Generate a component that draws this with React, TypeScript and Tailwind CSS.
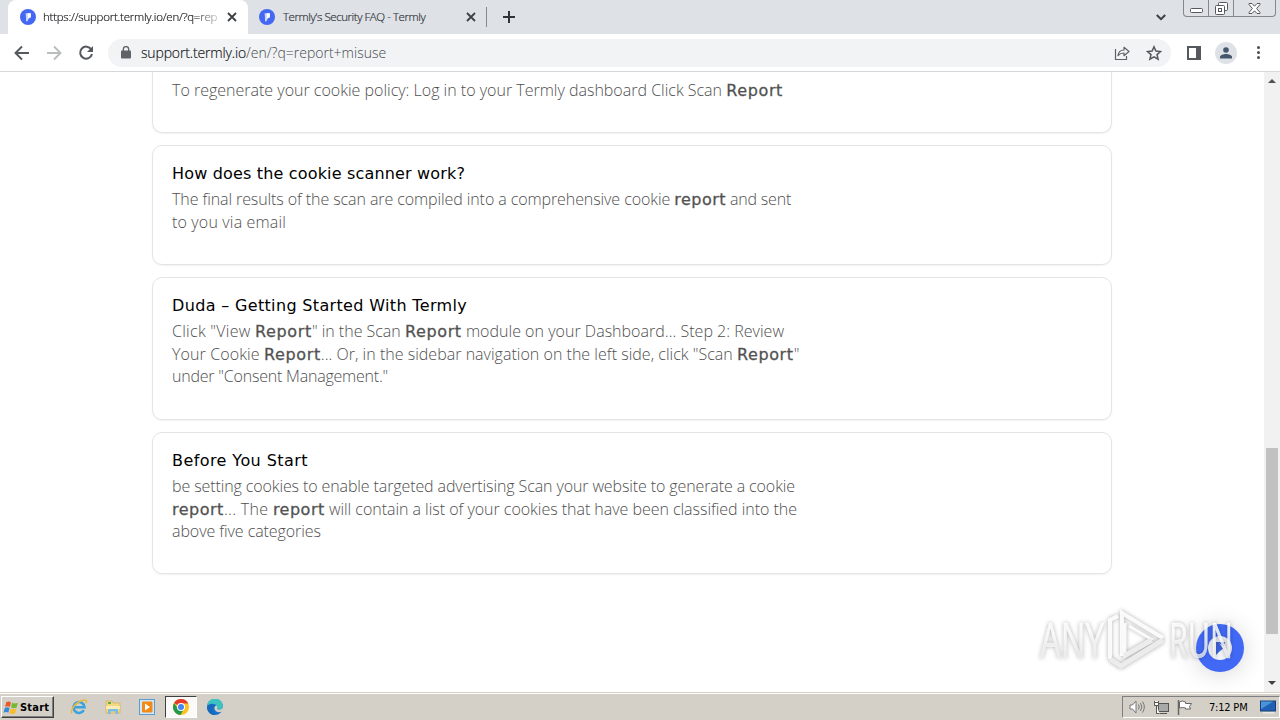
import React from "react";

interface Segment {
  text: string;
  className: string;
}

interface Article {
  title: string;
  titleClass: string;
  cardClass: string;
  lines: Segment[][];
}

const bold = "[font-family:'DejaVu_Sans',sans-serif] font-normal tracking-[0.63px] [-webkit-text-stroke:0.3px_#5c5c5c]";
const boldLower = "[font-family:'DejaVu_Sans',sans-serif] font-normal tracking-[0.5px] [-webkit-text-stroke:0.3px_#5c5c5c]";

const articles: Article[] = [
  {
    title: "How does the cookie scanner work?",
    titleClass: "tracking-[0.17px]",
    cardClass: "h-[120px]",
    lines: [
      [
        { text: "The final results of the scan are compiled into a comprehensive cookie ", className: "tracking-[-0.09px]" },
        { text: "report", className: boldLower },
        { text: " and sent", className: "tracking-[-0.2px]" },
      ],
      [{ text: "to you via email", className: "tracking-[0.16px]" }],
    ],
  },
  {
    title: "Duda – Getting Started With Termly",
    titleClass: "tracking-[0.34px]",
    cardClass: "h-[143px]",
    lines: [
      [
        { text: 'Click "View ', className: "tracking-[0.28px]" },
        { text: "Report", className: bold },
        { text: '" in the Scan ', className: "tracking-[-0.01px]" },
        { text: "Report", className: bold },
        { text: " module on your Dashboard... Step 2: Review", className: "tracking-[0.02px]" },
      ],
      [
        { text: "Your Cookie ", className: "tracking-[0.11px]" },
        { text: "Report", className: bold },
        { text: '... Or, in the sidebar navigation on the left side, click "Scan ', className: "tracking-[0.02px]" },
        { text: "Report", className: bold },
        { text: '"', className: "" },
      ],
      [{ text: 'under "Consent Management."', className: "tracking-[-0.21px]" }],
    ],
  },
  {
    title: "Before You Start",
    titleClass: "tracking-[0.42px]",
    cardClass: "h-[142px]",
    lines: [
      [{ text: "be setting cookies to enable targeted advertising Scan your website to generate a cookie", className: "tracking-[-0.11px]" }],
      [
        { text: "report", className: boldLower },
        { text: "... The ", className: "tracking-[0.33px]" },
        { text: "report", className: boldLower },
        { text: " will contain a list of your cookies that have been classified into the", className: "tracking-[-0.03px]" },
      ],
      [{ text: "above five categories", className: "tracking-[-0.07px]" }],
    ],
  },
];

function Line({ segments }: { segments: Segment[] }) {
  return (
    <p className="h-[22.5px] text-base leading-[22.5px] font-light whitespace-pre text-[#4f4f4f]">
      {segments.map((s, i) => (
        <span key={i} className={s.className}>{s.text}</span>
      ))}
    </p>
  );
}

function TermlyIcon() {
  return (
    <svg width="16" height="16" viewBox="0 0 16 16" className="shrink-0">
      <circle cx="8" cy="8" r="8" fill="#4568f2" />
      <path d="M5.600 4.200h5.200v4L8.600 9.600 7.600 12.200H6V8.600z" fill="#c9d4ff" />
      <path d="M7.800 4.200h3v4L7.800 9.800z" fill="#fff" />
    </svg>
  );
}

function CloseIcon() {
  return (
    <svg width="10" height="10" viewBox="0 0 10 10" stroke="#3c4043" strokeWidth="1.800" className="shrink-0">
      <path d="M1 1l8 8M9 1l-8 8" />
    </svg>
  );
}

function TabStrip() {
  return (
    <div className="flex h-[34px] bg-[#dee1e6] pl-2">
      <div className="flex h-full w-60 items-center rounded-t-lg bg-white pl-3">
        <TermlyIcon />
        <span className="ml-[7px] w-[175px] overflow-hidden text-[11.5px] tracking-[-0.24px] whitespace-nowrap text-[#202124] [-webkit-text-stroke:0.2px_#202124] [mask-image:linear-gradient(to_right,black_85%,transparent_105%)]">
          https://support.termly.io/en/?q=rep
        </span>
        <span className="ml-[9px] flex"><CloseIcon /></span>
      </div>
      <div className="flex h-full w-[239px] items-center pl-[11px]">
        <TermlyIcon />
        <span className="ml-2 w-[183px] text-[11.5px] tracking-[-0.44px] whitespace-nowrap text-[#303338] [-webkit-text-stroke:0.2px_#303338]">
          Termly's Security FAQ - Termly
        </span>
        <CloseIcon />
        <span className="ml-[10px] h-5 w-px shrink-0 bg-[#85888d]" />
      </div>
      <div className="flex h-full items-center pl-4">
        <svg width="12" height="12" viewBox="0 0 12 12" stroke="#303338" strokeWidth="2">
          <path d="M6 0v12M0 6h12" />
        </svg>
      </div>
      <div className="ml-auto flex h-full items-center pr-[17px]">
        <svg width="10" height="7" viewBox="0 0 10 7" fill="none" stroke="#3c4043" strokeWidth="2">
          <path d="M.8 1L5 5.200 9.200 1" />
        </svg>
      </div>
      <div className="mr-1 flex h-[17px] w-[93px] rounded-b border border-t-0 border-[#84878d]">
        <div className="flex w-[25px] items-center justify-center border-r border-[#84878d] pt-[5px]">
          <svg width="13" height="6" viewBox="0 0 13 6" fill="#fff" stroke="#55585e">
            <rect x=".5" y=".5" width="12" height="4" rx="1" />
          </svg>
        </div>
        <div className="flex w-[25px] items-center justify-center border-r border-[#84878d]">
          <svg width="13" height="13" viewBox="0 0 13 13" fill="#fff" stroke="#55585e">
            <rect x="3.500" y=".5" width="9" height="8" rx="1" />
            <rect x=".5" y="3.500" width="9" height="9" rx="1" />
            <rect x="3.500" y="6.500" width="3" height="3" />
          </svg>
        </div>
        <div className="flex flex-1 items-center justify-center">
          <svg width="13" height="11" viewBox="0 0 13 11" fill="#fff" stroke="#55585e">
            <path d="M1 .5h3l2.500 2.700L9 .5h3v1L8.600 5.500 12 9.500v1H9L6.500 7.800 4 10.500H1v-1l3.400-4L1 1.500z" />
          </svg>
        </div>
      </div>
    </div>
  );
}

function Toolbar() {
  return (
    <div className="flex h-[38px] items-center border-b border-[#d5d7da] bg-white pl-[14px]">
      <div className="flex w-[94px] shrink-0 items-center gap-4">
        <svg width="16" height="16" viewBox="0 0 16 16" fill="none" stroke="#55585c" strokeWidth="1.900">
          <path d="M15 8H2M8 1.500L1.500 8 8 14.500" />
        </svg>
        <svg width="16" height="16" viewBox="0 0 16 16" fill="none" stroke="#babcbe" strokeWidth="1.900">
          <path d="M1 8h13M8 1.500L14.500 8 8 14.500" />
        </svg>
        <svg width="16" height="16" viewBox="0 0 16 16" fill="none" stroke="#55585c" strokeWidth="2">
          <path d="M13.300 4.500A6 6 0 1 0 14 9" />
          <path d="M15 1v6H9z" fill="#55585c" stroke="none" />
        </svg>
      </div>
      <div className="flex h-7 w-[1063px] items-center rounded-full bg-[#f1f3f4] pl-[13px]">
        <svg width="10" height="13" viewBox="0 0 10 13">
          <rect y="4.500" width="10" height="8" rx="1" fill="#5f6368" />
          <path d="M2.300 5V3.300a2.700 2.700 0 0 1 5.400 0V5" fill="none" stroke="#5f6368" strokeWidth="1.400" />
        </svg>
        <p className="ml-[10px] text-sm whitespace-nowrap">
          <span className="tracking-[-0.15px] text-[#101214] [-webkit-text-stroke:0.15px_#101214]">support.termly.io</span>
          <span className="text-[#45494e]">/en/?q=report+misuse</span>
        </p>
        <svg width="16" height="16" viewBox="0 0 16 16" fill="none" stroke="#5f6368" strokeWidth="1.200" className="mr-4 ml-auto">
          <path d="M1.500 4v10.500h11V11" />
          <path d="M4 10.500C4.500 7 6.500 5 10 5V2.300l5 4.200-5 4.200V8C7.500 8 5.500 8.800 4 10.500z" strokeLinejoin="round" />
        </svg>
        <svg width="16" height="16" viewBox="0 0 16 16" fill="none" stroke="#55585c" strokeWidth="1.500" className="mr-[9px]">
          <path d="M8 1.800l1.900 4.300 4.600.4-3.500 3.100 1.100 4.600L8 11.800l-4.100 2.400L5 9.600 1.500 6.500l4.600-.4z" />
        </svg>
      </div>
      <svg width="15" height="14" viewBox="0 0 15 14" className="ml-4">
        <rect x="1" y="1" width="12" height="12" fill="#fff" stroke="#55585c" strokeWidth="2" />
        <rect x="9" y="0" width="5" height="14" fill="#55585c" />
      </svg>
      <div className="ml-[13px] flex size-[22px] items-center justify-center rounded-full bg-[#dee1e6]">
        <svg width="12" height="12" viewBox="0 0 12 12" fill="#47566f">
          <circle cx="6" cy="3" r="2.800" />
          <path d="M0 11.500V10c0-2 3.500-3 6-3s6 1 6 3v1.500z" />
        </svg>
      </div>
      <div className="ml-5 flex flex-col gap-[2px]">
        <span className="size-[3px] rounded-full bg-[#4b4e52]" />
        <span className="size-[3px] rounded-full bg-[#4b4e52]" />
        <span className="size-[3px] rounded-full bg-[#4b4e52]" />
      </div>
    </div>
  );
}

function Scrollbar() {
  return (
    <div className="flex w-4 shrink-0 flex-col items-center bg-[#f1f1f1]">
      <svg width="8" height="4" viewBox="0 0 8 4" className="mt-[7px]"><path d="M0 4l4-4 4 4z" fill="#505050" /></svg>
      <div className="mt-[365px] h-[186px] w-3 bg-[#c1c1c1]" />
      <svg width="8" height="4" viewBox="0 0 8 4" className="mt-auto mb-[7px]"><path d="M0 0l4 4 4-4z" fill="#404040" /></svg>
    </div>
  );
}

function Watermark() {
  return (
    <svg
      width="204"
      height="72"
      viewBox="0 0 204 72"
      className="absolute right-[41px] bottom-[14px] drop-shadow-[0_0_2px_rgba(0,0,0,0.35)]"
    >
      <defs>
        <linearGradient id="fade" x1="0" y1="0" x2="0" y2="1">
          <stop offset=".4" stopColor="#fff" stopOpacity=".85" />
          <stop offset="1" stopColor="#e4e4e4" stopOpacity=".7" />
        </linearGradient>
      </defs>
      <g fill="url(#fade)" stroke="url(#fade)" strokeWidth=".6" fontFamily="Open Sans, sans-serif" fontWeight="400" fontSize="49">
        <text x="5" y="52" textLength="64" lengthAdjust="spacingAndGlyphs">ANY</text>
        <text x="134" y="52" textLength="64" lengthAdjust="spacingAndGlyphs">RUN</text>
      </g>
      <g fill="none" stroke="#fff" strokeOpacity=".9" strokeWidth="4">
        <path d="M75 53V14l8-4M87 50V7l41 25" />
        <path d="M90 17v33l26-17-22-13" strokeWidth="3" />
      </g>
      <path d="M75 53l11 7 42-26M89 50l28-16" fill="none" stroke="#ececec" strokeWidth="5" />
    </svg>
  );
}

function ChatButton() {
  return (
    <div className="absolute right-9 bottom-5 flex size-12 items-center justify-center rounded-full bg-[#4169f5] shadow-[0_2px_24px_rgba(0,0,0,0.16)]">
      <svg width="24" height="24" viewBox="0 0 24 24">
        <circle cx="12" cy="12" r="12" fill="#f1f3fa" />
        <path d="M8 6h9l-1 6-4 3-4 4z" fill="#3f62dc" />
        <path d="M11 7l7 5-3 1z" fill="#cdd5f3" />
      </svg>
    </div>
  );
}

function QuickLaunch() {
  return (
    <div className="flex items-center">
      <div className="flex w-[34px] justify-center">
        <svg width="18" height="18" viewBox="0 0 18 18" fill="none">
          <path d="M13.800 12.200A5.500 5.500 0 1 1 14.500 9.200H4" stroke="#3aa3df" strokeWidth="2.600" />
          <path d="M2 15.500C-.5 12 6 4 12.500 2.200c4-1 4.500 1 3.300 3" stroke="#e9b93a" strokeWidth="1.500" />
        </svg>
      </div>
      <div className="flex w-[34px] justify-center">
        <svg width="16" height="16" viewBox="0 0 16 16">
          <path d="M1 2h6l1 2h7v10H1z" fill="#f4d983" stroke="#d1ac52" strokeWidth=".7" />
          <path d="M3 3h3v2H3z" fill="#5bab52" />
          <path d="M1 7h14v3H1z" fill="#fbedb5" />
          <path d="M3 15v-4q0-1 1-1h8q1 0 1 1v4h-2.500v-2.500h-5V15z" fill="#79bce5" />
        </svg>
      </div>
      <div className="flex w-[34px] justify-center">
        <svg width="16" height="16" viewBox="0 0 16 16">
          <rect x=".5" y=".5" width="15" height="15" fill="#d3e7f7" stroke="#5a9bd0" />
          <rect x="3" y="2.500" width="10.500" height="11" rx="1" fill="#f28a18" />
          <path d="M6 4.500l5 3.500-5 3.500z" fill="#fff" />
        </svg>
      </div>
      <div className="ml-px flex h-[22px] w-8 items-center justify-center border border-white border-t-[#404040] border-l-[#404040] bg-[#fbfaf9]">
        <svg width="16" height="16" viewBox="0 0 16 16">
          <circle cx="8" cy="8" r="8" fill="#fcc31e" />
          <path d="M8 8L1.070 4A8 8 0 0 1 14.930 4L15 4.500H8z" fill="#e33b2e" />
          <path d="M1.070 4A8 8 0 0 0 7.500 16L11 9.800 8 11.500 5 9.800z" fill="#269a4b" />
          <circle cx="8" cy="8" r="4" fill="#fff" />
          <circle cx="8" cy="8" r="3" fill="#4285f4" />
        </svg>
      </div>
      <div className="flex w-[36px] justify-center">
        <svg width="16" height="16" viewBox="0 0 16 16">
          <circle cx="8" cy="8" r="8" fill="#1a71c8" />
          <path d="M0 7.500A8 8 0 0 1 16 7.500c0 3-4 4-6 2.500.8-4-2.500-6-5.500-5.200C2.500 5.200.8 6.200 0 7.500z" fill="#3cc3c0" />
          <path d="M9.500 6.500c-2.500.5-3 4 0 6 2 1.200 4.200.7 5.500 0l1-1.500V8c-.5 2.500-4 3.500-6 2 .5-1 .4-2.500-.5-3.500z" fill="#d4d0c8" />
          <path d="M0 8c.5-3 6-4 8-1-3 1-3.500 6 1 9C4 16.500 0 13 0 8z" fill="#1769bd" />
        </svg>
      </div>
    </div>
  );
}

function Taskbar() {
  return (
    <div className="flex h-7 items-center border-t border-[#d4d0c8] bg-[#d4d0c8] pt-px pl-px shadow-[inset_0_1px_0_#fff] [font-family:'DejaVu_Sans_Condensed','DejaVu_Sans',sans-serif]">
      <div className="flex h-[22px] w-[53px] items-center border border-white border-r-[#404040] border-b-[#404040] pl-px shadow-[inset_-1px_-1px_0_#808080]">
        <svg width="17" height="17" viewBox="0 0 16 16" className="shrink-0">
          <path d="M3 3q2.500-1.500 4.500 0L6.500 7.500Q4.500 6 2 7.500z" fill="#ea5a24" />
          <path d="M8.500 3.500q2.500 1.300 5.500 0l-1.200 4.500q-2.800 1.200-5.200 0z" fill="#74b833" />
          <path d="M1.700 8.500q2.500-1.500 4.500 0L5 13Q3 11.500.5 13z" fill="#3689d6" />
          <path d="M7.200 9q2.600 1.300 5.400 0l-1.200 4.500q-2.800 1.200-5.200 0z" fill="#f8bd26" />
        </svg>
        <span className="pt-[2px] text-[11px] leading-4 font-bold tracking-[0.2px] text-black">Start</span>
      </div>
      <div className="ml-2 flex"><QuickLaunch /></div>
      <div className="ml-auto flex h-[22px] w-[158px] items-center border border-white border-t-[#808080] border-l-[#808080] pl-[6px]">
        <svg width="16" height="14" viewBox="0 0 16 14" fill="none" stroke="#777">
          <path d="M1 5h2.500L7 1v12L3.500 9H1z" fill="#fff" />
          <path d="M9.500 4.500q1.500 2.500 0 5M11.500 3q2.700 4 0 8M13.500 1.500q3.700 5.500 0 11" />
        </svg>
        <svg width="16" height="15" viewBox="0 0 16 15" fill="#fff" stroke="#555" className="ml-2">
          <rect x="5.500" y="3.500" width="10" height="8" fill="#a8a8a8" />
          <path d="M7 13.500h7M1.500 1v4h4V1M3.500 5v8.500h3" />
          <path d="M1.500 2.500h4v3h-4z" />
        </svg>
        <svg width="16" height="15" viewBox="0 0 16 15" fill="#fff" stroke="#666" className="ml-[8px]">
          <path d="M2.500 2q3-2 6 0v1.500h6l-2 3 1 2.500h-5V8q-3-1-6 0z" />
          <path d="M1.500 0v15" strokeWidth="1.500" />
        </svg>
        <span className="ml-4 w-[40px] pt-[2px] text-[11px] leading-4 font-normal tracking-[-0.2px] whitespace-nowrap text-black">7:12 PM</span>
        <svg width="16" height="14" viewBox="0 0 16 14" className="ml-[11px] shrink-0">
          <rect x=".5" y="1" width="15" height="10" fill="#1f62b5" stroke="#193f75" />
          <path d="M1 1.500h12L1 9z" fill="#4b94da" />
          <rect x="3" y="12" width="11" height="1.500" fill="#e8e8e8" />
        </svg>
      </div>
    </div>
  );
}

export default function App() {
  return (
    <div className="flex h-[720px] w-[1280px] flex-col overflow-hidden bg-white font-light [font-family:'Open_Sans',sans-serif]">
      <TabStrip />
      <Toolbar />
      <div className="relative flex min-h-0 flex-1">
        <main className="flex flex-1 flex-col pl-[152px]">
          <section className="mb-3 h-[61px] w-[960px] rounded-b-[10px] border border-t-0 border-[#e4e4e4] pt-[7px] pl-[19px] shadow-[0_1px_2px_rgba(0,0,0,0.06)]">
            <Line
              segments={[
                { text: "To regenerate your cookie policy: Log in to your Termly dashboard Click Scan ", className: "" },
                { text: "Report", className: bold },
              ]}
            />
          </section>
          {articles.map((a) => (
            <section
              key={a.title}
              className={`mb-3 w-[960px] rounded-[10px] border border-[#e4e4e4] pt-[15px] pl-[19px] shadow-[0_1px_2px_rgba(0,0,0,0.06)] ${a.cardClass}`}
            >
              <h3
                className={`mb-px h-[26px] text-base leading-[26px] font-normal whitespace-nowrap text-black [font-family:'DejaVu_Sans',sans-serif] ${a.titleClass}`}
              >
                {a.title}
              </h3>
              {a.lines.map((l, i) => (
                <Line key={i} segments={l} />
              ))}
            </section>
          ))}
        </main>
        <Scrollbar />
        <div className="absolute right-0 bottom-0">
          <ChatButton />
          <Watermark />
        </div>
      </div>
      <Taskbar />
    </div>
  );
}
